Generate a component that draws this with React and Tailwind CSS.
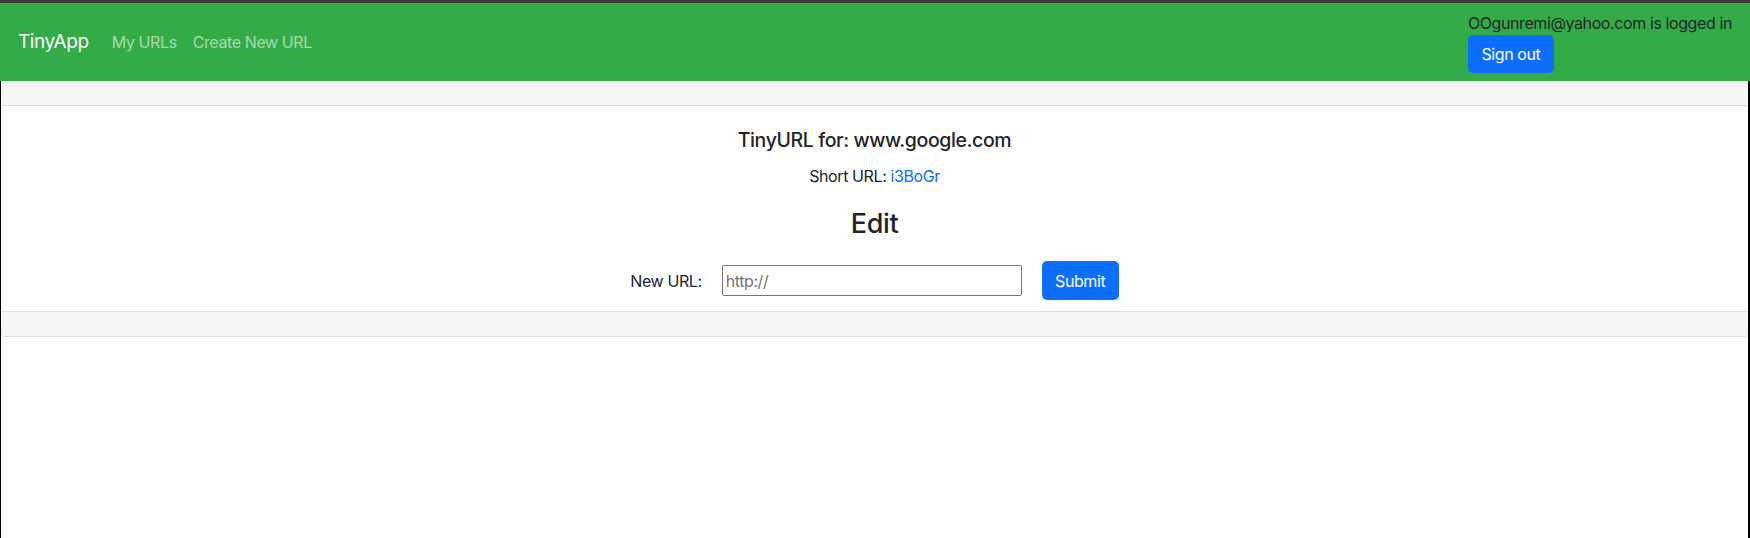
export default function App() {
  return (
    <div className="min-h-screen bg-white text-[#212529] tracking-[-0.025em]" style={{ fontFamily: 'Inter, "Liberation Sans", sans-serif' }}>
      <div className="h-[3px] bg-[#3b3b3b]" />
      <nav className="h-[78px] bg-[#33ac48] flex items-center justify-between pl-[18px] pr-[18px]">
        <div className="flex items-center">
          <span className="text-[19px] text-white mr-[23px]">TinyApp</span>
          <a className="text-[16px] text-white/55 mr-[16px]">My URLs</a>
          <a className="text-[16px] text-white/55">Create New URL</a>
        </div>
        <div className="flex flex-col items-start py-[8px]">
          <span className="text-[16px] leading-[24px] text-[#212529]">OOgunremi@yahoo.com is logged in</span>
          <button className="h-[38px] w-[86px] rounded-[5px] bg-[#0d6efd] text-white text-[16px]">Sign out</button>
        </div>
      </nav>
      <div className="border-l border-l-black border-r-2 border-r-black min-h-[457px]">
        <div className="border-b border-[#dcdcdc] rounded-b-[4px]">
          <div className="h-[25px] bg-[#f7f7f7] border-b border-[#dcdcdc]" />
          <div className="flex flex-col items-center pt-[22px] pb-[11px]">
            <h5 className="text-[19.5px] leading-[24px] font-medium">TinyURL for: www.google.com</h5>
            <p className="mt-[12px] text-[16px] leading-[24px]">
              Short URL: <a className="text-[#0d6efd]">i3BoGr</a>
            </p>
            <h3 className="mt-[19px] text-[27px] leading-[33px] font-medium">Edit</h3>
            <form className="mt-[21px] flex items-center">
              <label className="text-[16px] mr-[20px]">New URL:</label>
              <input
                type="text"
                placeholder="http://"
                className="w-[300px] h-[31px] border border-[#767676] rounded-[2px] px-[3px] text-[16px] placeholder:text-[#757575] mr-[20px]"
              />
              <button type="button" className="h-[39px] w-[77px] rounded-[5px] bg-[#0d6efd] text-white text-[16px]">Submit</button>
            </form>
          </div>
          <div className="h-[25px] bg-[#f7f7f7] border-t border-[#dcdcdc] rounded-b-[4px]" />
        </div>
      </div>
    </div>
  );
}
